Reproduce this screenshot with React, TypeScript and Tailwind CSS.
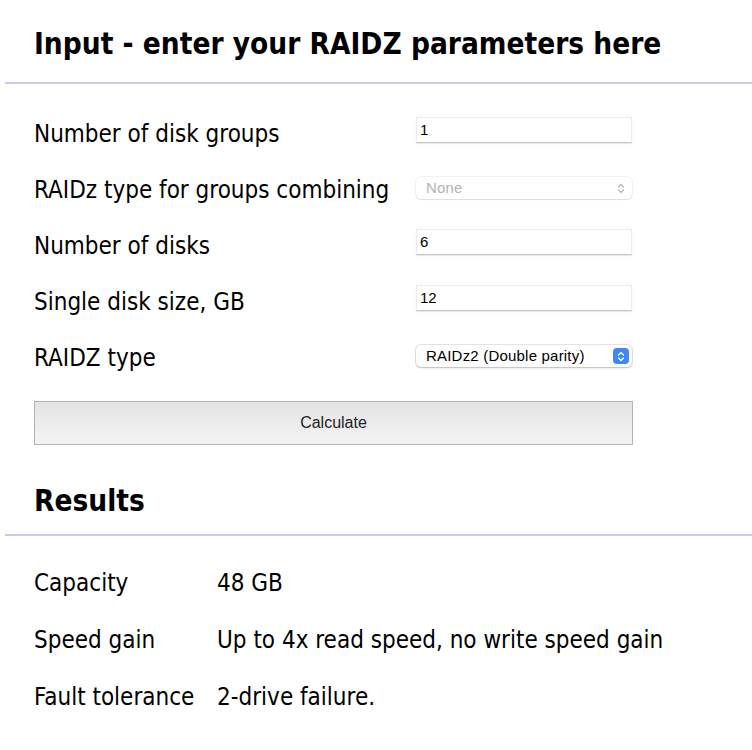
import React from "react";

const face = {
  fontFamily: '"DejaVu Sans Condensed", "DejaVu Sans", Verdana, sans-serif',
  fontStretch: "condensed" as const,
};
const ui = { fontFamily: '"Liberation Sans", Arial, sans-serif' };

function TextField({ value }: { value: string }) {
  return (
    <div
      className="mb-[8px] flex h-[26px] w-[216px] items-center border border-[#ececec] border-b-[#c4c4c4] bg-white pl-[3px] text-[15px] text-black shadow-[0_1px_1px_rgba(0,0,0,0.08)]"
      style={ui}
    >
      {value}
    </div>
  );
}

function UpDown({ color }: { color: string }) {
  return (
    <svg width="8" height="11" viewBox="0 0 8 11" fill="none">
      <path d="M1.5 4 L4 1.5 L6.5 4" stroke={color} strokeWidth="1.3" strokeLinecap="round" strokeLinejoin="round" />
      <path d="M1.5 7 L4 9.5 L6.5 7" stroke={color} strokeWidth="1.3" strokeLinecap="round" strokeLinejoin="round" />
    </svg>
  );
}

function SelectBox({ value, disabled }: { value: string; disabled?: boolean }) {
  return (
    <div
      className={
        "mb-[4px] flex h-[22px] w-[216px] items-center justify-between rounded-[5px] bg-white pl-[10px] pr-[3px] text-[15px] " +
        (disabled
          ? "text-[#b4b4b4] shadow-[0_0_0_1px_rgba(0,0,0,0.05),0_1px_1px_rgba(0,0,0,0.08)]"
          : "text-black shadow-[0_0_0_1px_rgba(0,0,0,0.1),0_1px_2px_rgba(0,0,0,0.18)]")
      }
      style={ui}
    >
      <span className="tracking-[0.2px]">{value}</span>
      {disabled ? (
        <span className="flex h-[16px] w-[16px] items-center justify-center">
          <UpDown color="#b8b8b8" />
        </span>
      ) : (
        <span className="flex h-[16px] w-[16px] items-center justify-center rounded-[4px] bg-[#3f86f7]">
          <UpDown color="#ffffff" />
        </span>
      )}
    </div>
  );
}

function Heading({ children, top }: { children: React.ReactNode; top: string }) {
  return (
    <div className={"ml-[5px] border-b-2 border-[#c9c9f6] pl-[29px] " + top}>
      <h2 className="text-[29.5px] font-bold leading-[34px] text-black" style={face}>
        {children}
      </h2>
    </div>
  );
}

export default function App() {
  const inputs: { label: string; field: React.ReactNode }[] = [
    { label: "Number of disk groups", field: <TextField value="1" /> },
    { label: "RAIDz type for groups combining", field: <SelectBox value="None" disabled /> },
    { label: "Number of disks", field: <TextField value="6" /> },
    { label: "Single disk size, GB", field: <TextField value="12" /> },
    { label: "RAIDZ type", field: <SelectBox value="RAIDz2 (Double parity)" /> },
  ];
  const results = [
    ["Capacity", "48 GB"],
    ["Speed gain", "Up to 4x read speed, no write speed gain"],
    ["Fault tolerance", "2-drive failure."],
  ];

  return (
    <div className="h-[750px] w-[752px] overflow-hidden bg-white text-black">
      <Heading top="pt-[27px] pb-[21px]">Input - enter your RAIDZ parameters here</Heading>

      <div className="pl-[34px] pt-[22px]">
        {inputs.map((r) => (
          <div key={r.label} className="flex h-14 items-center">
            <div className="w-[382px] text-[24px]" style={face}>
              {r.label}
            </div>
            {r.field}
          </div>
        ))}
        <button
          className="mt-[15px] flex h-[44px] w-[599px] items-center justify-center border border-[#b3b3b3] bg-gradient-to-b from-[#e3e3e3] to-[#f4f4f4] text-[16px] text-[#222]"
          style={ui}
        >
          Calculate
        </button>
      </div>

      <Heading top="pt-[39px] pb-[16px]">Results</Heading>

      <div className="pl-[34px] pt-[18px]">
        {results.map(([k, v]) => (
          <div key={k} className="flex h-[57px] items-center text-[24px]" style={face}>
            <div className="w-[183px]">{k}</div>
            <div>{v}</div>
          </div>
        ))}
      </div>
    </div>
  );
}
